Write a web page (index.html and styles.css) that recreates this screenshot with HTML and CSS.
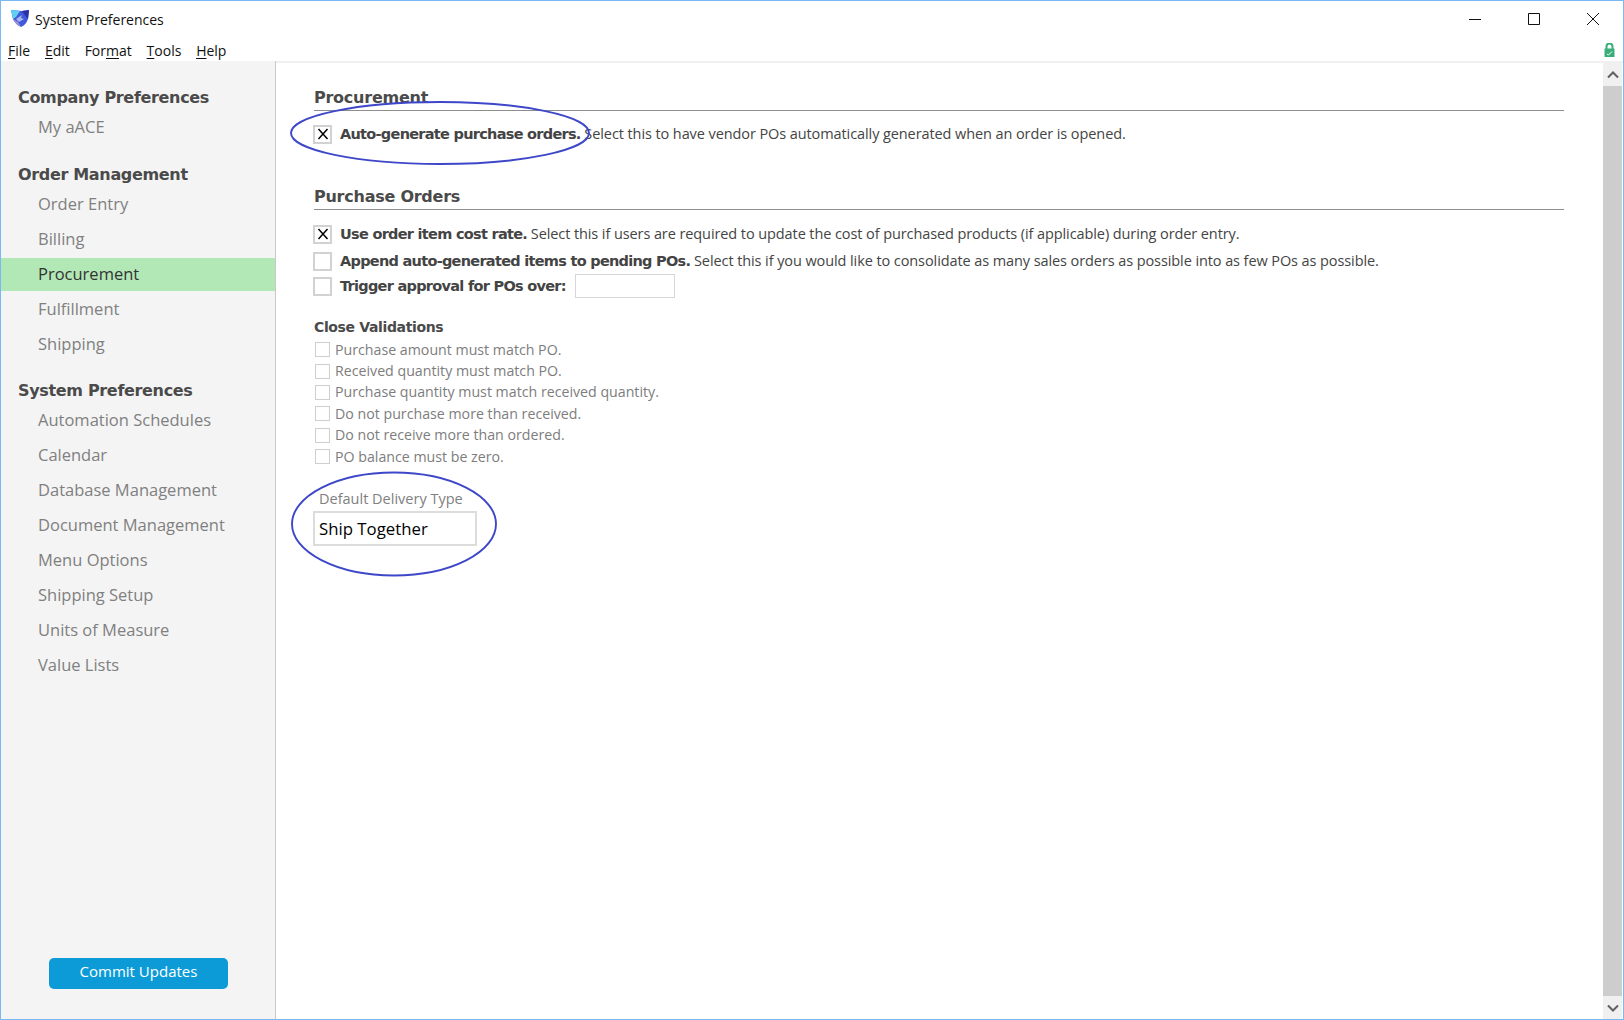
FILE: index.html
```html
<!DOCTYPE html>
<html lang="en">
<head>
<meta charset="utf-8">
<title>System Preferences</title>
<link rel="stylesheet" href="styles.css">
</head>
<body>
<div class="window">
  <header class="titlebar">
    <svg class="logo" width="20" height="20" viewBox="0 0 20 20">
      <path d="M1 2 L12 3 L19 2 L18 11 Q16 17 11 19 Q5 16 3 11 Z" fill="#3f5ad8"/>
      <path d="M1 2 L10 3 L6 9 L3 11 Z" fill="#5fd0f2"/>
      <path d="M12 3 L19 2 L18 11 L14 6 Z" fill="#2c2ea6"/>
      <path d="M6 11 L12 7 L11 10 L14 11 L9 14 Z" fill="#a9b4f0"/>
      <path d="M11 19 Q5 16 3 11 L8 14 Z" fill="#9d93d4"/>
    </svg>
    <span class="title">System Preferences</span>
    <div class="winbtns">
      <svg width="14" height="14" viewBox="0 0 14 14"><path d="M1 7.5H13" stroke="#111" fill="none"/></svg>
      <svg width="14" height="14" viewBox="0 0 14 14"><path d="M1.5 1.5H12.5V12.5H1.5Z" stroke="#111" fill="none"/></svg>
      <svg width="14" height="14" viewBox="0 0 14 14"><path d="M1 1L13 13M13 1L1 13" stroke="#111" fill="none"/></svg>
    </div>
  </header>
  <nav class="menubar">
    <span class="menu"><u>F</u>ile</span>
    <span class="menu"><u>E</u>dit</span>
    <span class="menu">For<u>m</u>at</span>
    <span class="menu"><u>T</u>ools</span>
    <span class="menu"><u>H</u>elp</span>
    <svg class="lock" width="11" height="14" viewBox="0 0 11 14">
      <path d="M2.5 6V3.5a3 3 0 0 1 6 0V6" fill="none" stroke="#3aae78" stroke-width="2"/>
      <rect x="0.5" y="5.5" width="10" height="8.5" fill="#3aae78"/>
      <path d="M3 11l1.5 1L8 8.5" fill="none" stroke="#fff" stroke-width="1"/>
    </svg>
  </nav>
  <div class="body">
    <aside class="sidebar">
      <div class="navgroups">
        <section class="navgroup">
          <h3>Company Preferences</h3>
          <a>My aACE</a>
        </section>
        <section class="navgroup">
          <h3>Order Management</h3>
          <a>Order Entry</a>
          <a>Billing</a>
          <a class="active">Procurement</a>
          <a>Fulfillment</a>
          <a>Shipping</a>
        </section>
        <section class="navgroup">
          <h3>System Preferences</h3>
          <a>Automation Schedules</a>
          <a>Calendar</a>
          <a>Database Management</a>
          <a>Document Management</a>
          <a>Menu Options</a>
          <a>Shipping Setup</a>
          <a>Units of Measure</a>
          <a>Value Lists</a>
        </section>
      </div>
      <button class="commit">Commit Updates</button>
    </aside>
    <main class="content">
      <section class="sec sec-proc">
        <h2>Procurement</h2>
        <div class="row row-first">
          <span class="cb checked"><svg width="12" height="12" viewBox="0 0 12 12"><path d="M1.5 1L10.5 11M10.5 1L1.5 11" stroke="#000" stroke-width="1.5" fill="none"/></svg></span>
          <p><b>Auto-generate purchase orders.</b> Select this to have vendor POs automatically generated when an order is opened.</p>
        </div>
      </section>
      <section class="sec sec-po">
        <h2>Purchase Orders</h2>
        <div class="row row-use">
          <span class="cb checked"><svg width="12" height="12" viewBox="0 0 12 12"><path d="M1.5 1L10.5 11M10.5 1L1.5 11" stroke="#000" stroke-width="1.5" fill="none"/></svg></span>
          <p><b>Use order item cost rate.</b> Select this if users are required to update the cost of purchased products (if applicable) during order entry.</p>
        </div>
        <div class="row row-append">
          <span class="cb"></span>
          <p><b>Append auto-generated items to pending POs.</b> Select this if you would like to consolidate as many sales orders as possible into as few POs as possible.</p>
        </div>
        <div class="row row-trigger">
          <span class="cb"></span>
          <p><b>Trigger approval for POs over:</b></p>
          <span class="amount"></span>
        </div>
      </section>
      <section class="validations">
        <h4>Close Validations</h4>
        <div class="vrow"><span class="cb small"></span>Purchase amount must match PO.</div>
        <div class="vrow"><span class="cb small"></span>Received quantity must match PO.</div>
        <div class="vrow"><span class="cb small"></span>Purchase quantity must match received quantity.</div>
        <div class="vrow"><span class="cb small"></span>Do not purchase more than received.</div>
        <div class="vrow"><span class="cb small"></span>Do not receive more than ordered.</div>
        <div class="vrow"><span class="cb small"></span>PO balance must be zero.</div>
      </section>
      <section class="delivery">
        <label>Default Delivery Type</label>
        <div class="field">Ship Together</div>
      </section>
      <svg class="ring ring-a" width="304" height="66" viewBox="0 0 304 66"><ellipse cx="152" cy="33" rx="149" ry="31" fill="none" stroke="#3d47c8" stroke-width="1.9"/></svg>
      <svg class="ring ring-b" width="210" height="108" viewBox="0 0 210 108"><ellipse cx="105" cy="54" rx="102" ry="51.5" fill="none" stroke="#3d47c8" stroke-width="1.9"/></svg>
    </main>
    <div class="scrollbar">
      <span class="sbtn"><svg width="12" height="8" viewBox="0 0 12 8"><path d="M1 6.5L6 1.5L11 6.5" fill="none" stroke="#606060" stroke-width="2"/></svg></span>
      <span class="thumb"></span>
      <span class="sbtn"><svg width="12" height="8" viewBox="0 0 12 8"><path d="M1 1.5L6 6.5L11 1.5" fill="none" stroke="#606060" stroke-width="2"/></svg></span>
    </div>
  </div>
</div>
</body>
</html>
```
FILE: styles.css
```css
* { box-sizing: border-box; }
html, body { margin: 0; height: 100%; }
body { background: #fff; font-family: "Open Sans", "Noto Sans", sans-serif; color: #222; overflow: hidden; }
.window { width: 1624px; height: 1020px; border: 1px solid #7ab8f3; display: flex; flex-direction: column; background: #fff; }
.titlebar { height: 35px; flex: none; display: flex; align-items: center; padding-left: 9px; }
.logo { flex: none; margin-top: -2px; }
.title { margin: 2px 0 0 5px; font: 14px "Open Sans", sans-serif; color: #111; }
.winbtns { margin-left: auto; display: flex; gap: 45px; padding-right: 23px; margin-top: 1px; }
.winbtns svg { display: block; }
.menubar { height: 25px; flex: none; display: flex; align-items: center; padding: 3px 0 0 7px; gap: 14.8px; font: 14px "Open Sans", sans-serif; color: #111; }
.menu u { text-underline-offset: 2px; }
.lock { margin-left: auto; margin-right: 8px; }
.body { flex: 1; min-height: 0; display: flex; border-top: 2px solid #f0f0f0; }
.sidebar { width: 275px; flex: none; background: #f4f4f4; border-right: 1px solid #c8c8c8; display: flex; flex-direction: column; padding-bottom: 30px; margin-top: -2px; }
.navgroups { padding-top: 25px; flex: 1; }
.navgroup { margin-bottom: 18.5px; }
.navgroup h3 { margin: 0 0 1px 17px; height: 24px; font: bold 16px/24px "DejaVu Sans", sans-serif; letter-spacing: -0.33px; color: #4a4a4a; }
.navgroup a { display: block; height: 33px; margin-bottom: 2px; padding-left: 37px; font: 16.5px/32px "Open Sans", sans-serif; color: #808080; }
.navgroup a.active { background: #b2e8b6; color: #333; }
.commit { align-self: flex-start; margin-left: 48px; width: 179px; height: 31px; border: 0; border-radius: 5px; background: #0d9bd8; color: #fff; font: 15px "Open Sans", sans-serif; padding: 0 0 5px; }
.content { flex: 1; min-width: 0; position: relative; padding: 0 39px 0 38px; }
.sec h2 { margin: 0; font: bold 16px/24px "DejaVu Sans", sans-serif; letter-spacing: -0.25px; color: #4a4a4a; height: 25px; border-bottom: 1px solid #8e8e8e; }
.sec-proc { padding-top: 23px; }
.sec-po { padding-top: 41px; }
.row { display: flex; align-items: center; color: #444; }
.row p { margin: 0; font: 14.5px/20px "Open Sans", sans-serif; letter-spacing: -0.09px; color: #444; white-space: nowrap; }
.row b { font: bold 14.5px/20px "DejaVu Sans", sans-serif; letter-spacing: -0.72px; }
.cb { flex: none; width: 19px; height: 19px; border: 2px solid #d2d2d2; background: #fff; display: flex; align-items: center; justify-content: center; margin: 0 8px 0 -1px; }
.row-first { margin-top: 13px; }
.row-use { margin-top: 14px; }
.row-append { margin-top: 7px; }
.row-trigger { margin-top: 3px; }
.amount { width: 100px; height: 24px; border: 1px solid #d6d6d6; margin-left: 9px; }
.validations { margin-top: 17px; }
.validations h4 { margin: 0; font: bold 14px/24px "DejaVu Sans", sans-serif; letter-spacing: -0.36px; color: #4a4a4a; }
.vrow { display: flex; align-items: center; height: 21.4px; font: 14.2px/20px "Open Sans", sans-serif; color: #7d7d7d; }
.cb.small { width: 15px; height: 15px; border-width: 1.5px; border-color: #cfcfcf; margin: 0 5px 0 1px; }
.delivery { margin-top: 20px; }
.delivery label { display: block; padding-left: 5px; font: 14.5px/24px "Open Sans", sans-serif; color: #808080; }
.field { width: 164px; height: 35px; border: 2px solid #dcdcdc; padding-left: 4px; margin-left: -1px; font: 16.8px/31px "Open Sans", sans-serif; color: #000; }
.ring { position: absolute; }
.ring-a { left: 12px; top: 37px; }
.ring-b { left: 13px; top: 407px; }
.scrollbar { width: 19px; flex: none; margin-right: 1px; display: flex; flex-direction: column; background: #f0f0f0; }
.sbtn { height: 23px; flex: none; display: flex; align-items: center; justify-content: center; }
.thumb { flex: 1; background: #cdcdcd; }
```
